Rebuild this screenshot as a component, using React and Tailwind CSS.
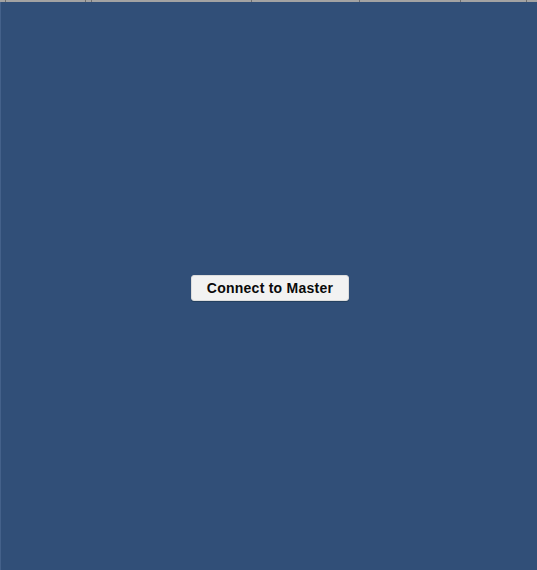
export default function App() {
  const ticks = [5, 85, 91, 251, 359, 460, 526];
  return (
    <div className="relative w-[537px] h-[570px] bg-[#314f78] flex flex-col font-['Liberation_Sans',Arial,sans-serif]">
      <div className="relative h-[2px] w-full bg-[#a3a3a3] shrink-0">
        {ticks.map((x) => (
          <span
            key={x}
            className="absolute top-0 h-[2px] w-px bg-[#6e6e6e]"
            style={{ left: x }}
          />
        ))}
      </div>
      <div className="flex flex-1 border-l border-[#44618a]">
        <div className="flex flex-1 items-center justify-center pt-[4px]">
          <button className="h-[26px] w-[158px] rounded-[3px] bg-[#f2f2f2] border border-[#dcdcdc] shadow-[0_1px_0_#24405f] text-[14px] font-bold tracking-[0.25px] text-[#0a0a0a] leading-none ml-[2px]">
            Connect to Master
          </button>
        </div>
      </div>
    </div>
  );
}
